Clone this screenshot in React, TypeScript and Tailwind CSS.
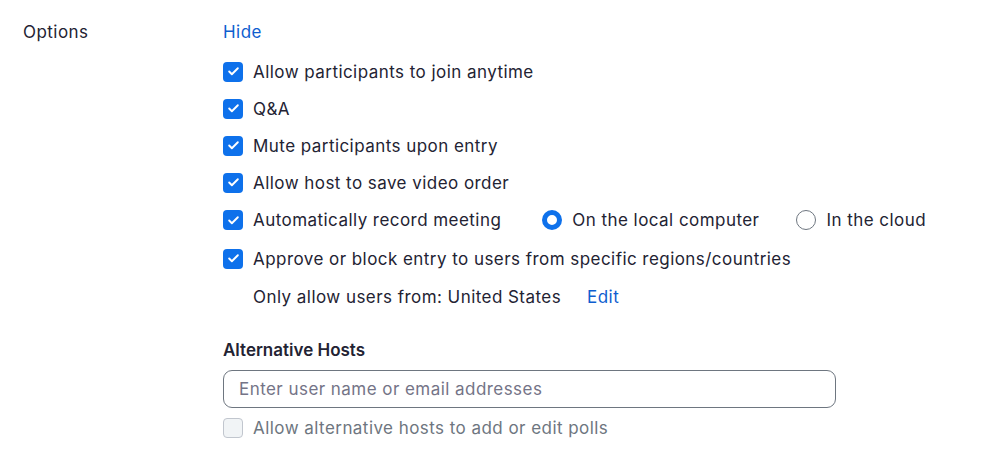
import { Check } from "lucide-react";

const options = [
  "Allow participants to join anytime",
  "Q&A",
  "Mute participants upon entry",
  "Allow host to save video order",
];

function Box({ disabled = false }: { disabled?: boolean }) {
  if (disabled) {
    return (
      <span className="w-5 h-5 shrink-0 rounded-[4px] border border-[#c1c6ce] bg-[#f1f4f6]" />
    );
  }
  return (
    <span className="w-5 h-5 shrink-0 rounded-[4px] bg-[#0e71eb] flex items-center justify-center">
      <Check className="w-[13px] h-[13px] text-white" strokeWidth={3.5} />
    </span>
  );
}

function Radio({ on, label }: { on: boolean; label: string }) {
  return (
    <span className="flex items-center gap-[10px]">
      <span
        className={
          on
            ? "w-5 h-5 rounded-full border-[5px] border-[#0e71eb] bg-white"
            : "w-5 h-5 rounded-full border border-[#6e7680] bg-white"
        }
      />
      <span>{label}</span>
    </span>
  );
}

export default function App() {
  return (
    <div
      className="w-[985px] h-[462px] bg-white text-[#232333] text-[17px] leading-6 tracking-[0.45px] flex"
      style={{ fontFamily: "Inter, 'Noto Sans', sans-serif" }}
    >
      {/* Label column */}
      <div className="w-[223px] pl-[23px] pt-[20px]">Options</div>

      {/* Settings column */}
      <div className="flex-1 pt-[20px]">
        <div className="text-[#0e5ecf]">Hide</div>

        <div className="mt-[9px]">
          {options.map((o) => (
            <div key={o} className="h-[37px] flex items-center gap-[10px]">
              <Box />
              <span>{o}</span>
            </div>
          ))}
          <div className="h-[38px] flex items-center gap-[10px]">
            <Box />
            <span>Automatically record meeting</span>
            <div className="ml-[31px] flex items-center gap-[37px]">
              <Radio on label="On the local computer" />
              <Radio on={false} label="In the cloud" />
            </div>
          </div>
          <div className="h-[39px] flex items-center gap-[10px]">
            <Box />
            <span>Approve or block entry to users from specific regions/countries</span>
          </div>
          <div className="h-[38px] flex items-center pl-[30px]">
            <span>Only allow users from: United States</span>
            <span className="ml-[26px] text-[#0e5ecf]">Edit</span>
          </div>
        </div>

        <div className="mt-[22px] font-semibold tracking-normal">Alternative Hosts</div>
        <div className="mt-[8px] w-[613px] h-[38px] rounded-[9px] border border-[#6e7680] flex items-center px-[15px] text-[#747487]">
          Enter user name or email addresses
        </div>
        <div className="mt-[8px] flex items-center gap-[10px] text-[#6e7680]">
          <Box disabled />
          <span>Allow alternative hosts to add or edit polls</span>
        </div>
      </div>
    </div>
  );
}
